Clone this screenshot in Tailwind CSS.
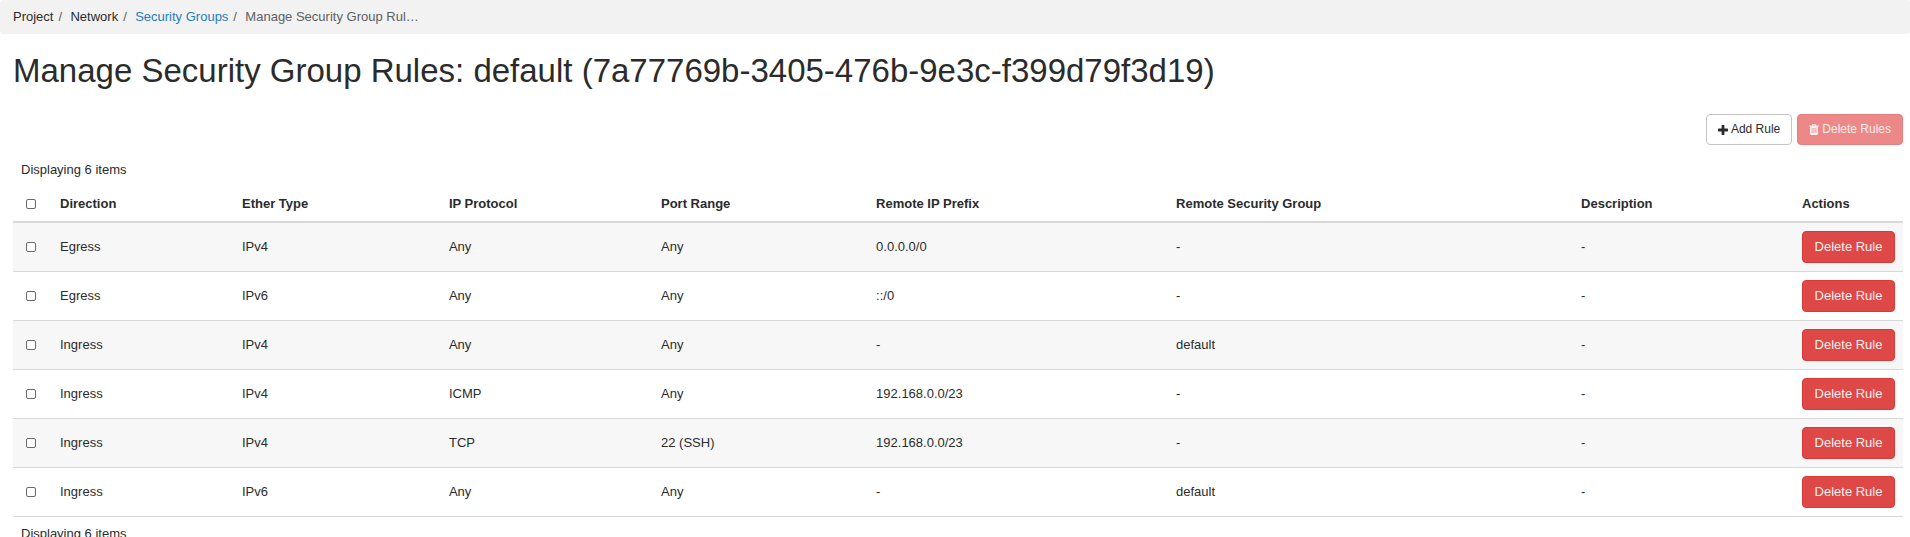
<!DOCTYPE html>
<html lang="en">
<head>
<meta charset="utf-8">
<title>Manage Security Group Rules</title>
<script src="https://cdn.jsdelivr.net/npm/@tailwindcss/browser@4"></script>
</head>
<body class="bg-white font-['Liberation_Sans',Arial,sans-serif] text-[13px] leading-[19px] text-[#2b2b2b]">
<nav aria-label="Breadcrumb" class="rounded-[4px] bg-[#f2f2f2] px-[13px] pt-[7px] pb-2">
  <ol class="flex text-[#606060]">
    <li class="text-[#2b2b2b]">Project</li>
    <li class="flex"><span class="w-[17px] pl-[5px] text-[#606060]">/</span><span class="text-[#2b2b2b]">Network</span></li>
    <li class="flex"><span class="w-[17px] pl-[5px]">/</span><a href="#" class="text-[#1f7dc1]">Security Groups</a></li>
    <li class="flex"><span class="w-[17px] pl-[5px]">/</span><span aria-current="page">Manage Security Group Rul…</span></li>
  </ol>
</nav>
<main class="pr-[7px] pl-[13px]">
  <h1 class="pt-[17px] text-[33px] leading-10">Manage Security Group Rules: default (7a77769b-3405-476b-9e3c-f399d79f3d19)</h1>
  <div class="mt-[23px] flex justify-end gap-[5px] text-[12px] leading-[19px]">
    <button type="button" class="flex items-center gap-[3px] rounded-[4px] border border-[#c4c4c4] px-[11px] py-[5px]">
      <svg class="size-[10px]" viewBox="0 0 10 10" fill="currentColor" aria-hidden="true"><path d="M4.200 0h1.600q.6 0 .6.6v3h3q.6 0 .6.6v1.600q0 .6-.6.6h-3v3q0 .6-.6.6H4.200q-.6 0-.6-.6v-3h-3q-.6 0-.6-.6V4.200q0-.6.6-.6h3v-3q0-.6.6-.6z"/></svg>Add Rule</button>
    <button type="button" disabled class="flex items-center gap-[3px] rounded-[4px] border border-[#e67f7e] bg-[#ec8988] px-[11px] py-[5px] text-[#fdeeee]">
      <svg class="h-[11px] w-[10px]" viewBox="0 0 10 11" fill="currentColor" aria-hidden="true"><path fill-rule="evenodd" d="M.3 1.500h2.500L3.300.4Q3.500 0 4 0h2q.5 0 .7.4l.5 1.100h2.500q.3 0 .3.300v.5q0 .3-.3.3h-.7v7q0 1.400-1.200 1.400H2.200Q1 11 1 9.600v-7H.3q-.3 0-.3-.3v-.5q0-.3.3-.3zM3.900 1.500h2.200L5.800.8H4.200zM2.700 4v5h.8V4zM4.600 4v5h.8V4zM6.500 4v5h.8V4z"/></svg>Delete Rules</button>
  </div>
  <div class="mt-[7px] p-2">Displaying 6 items</div>
  <table class="-mt-px w-full table-fixed border-collapse text-left">
    <colgroup><col class="w-[39px]"><col class="w-[9.63%]"><col class="w-[10.95%]"><col class="w-[11.22%]"><col class="w-[11.38%]"><col class="w-[15.87%]"><col class="w-[21.43%]"><col><col class="w-[109px]"></colgroup>
    <thead>
      <tr class="border-b-2 border-[#d8d8d8] *:p-2"><th><input type="checkbox" aria-label="Select all rules" class="ml-[5px] block size-[10px] appearance-none rounded-[2px] border border-[#6b6b6b] bg-white"></th><th>Direction</th><th>Ether Type</th><th>IP Protocol</th><th>Port Range</th><th>Remote IP Prefix</th><th>Remote Security Group</th><th>Description</th><th>Actions</th></tr>
    </thead>
    <tbody id="rules" class="leading-[18px]"></tbody>
  </table>
  <div class="px-2 py-[7px]">Displaying 6 items</div>
</main>
<template id="rule">
  <tr class="border-b border-[#d8d8d8] odd:bg-[#f7f7f7] *:p-2"><td><input type="checkbox" aria-label="Select rule" class="ml-[5px] block size-[10px] appearance-none rounded-[2px] border border-[#6b6b6b] bg-white"></td><td></td><td></td><td></td><td></td><td></td><td></td><td></td><td><button type="button" class="block w-full rounded-[4px] border border-[#d93a37] bg-[#de4947] py-[6px] text-[#fdf1f1]">Delete Rule</button></td></tr>
</template>
<script>
const rules = [
  ['Egress', 'IPv4', 'Any', 'Any', '0.0.0.0/0', '-', '-'],
  ['Egress', 'IPv6', 'Any', 'Any', '::/0', '-', '-'],
  ['Ingress', 'IPv4', 'Any', 'Any', '-', 'default', '-'],
  ['Ingress', 'IPv4', 'ICMP', 'Any', '192.168.0.0/23', '-', '-'],
  ['Ingress', 'IPv4', 'TCP', '22 (SSH)', '192.168.0.0/23', '-', '-'],
  ['Ingress', 'IPv6', 'Any', 'Any', '-', 'default', '-'],
];
for (const rule of rules) {
  const row = document.getElementById('rule').content.cloneNode(true);
  rule.forEach((value, i) => { row.querySelectorAll('td')[i + 1].textContent = value; });
  document.getElementById('rules').append(row);
}
</script>
</body>
</html>
